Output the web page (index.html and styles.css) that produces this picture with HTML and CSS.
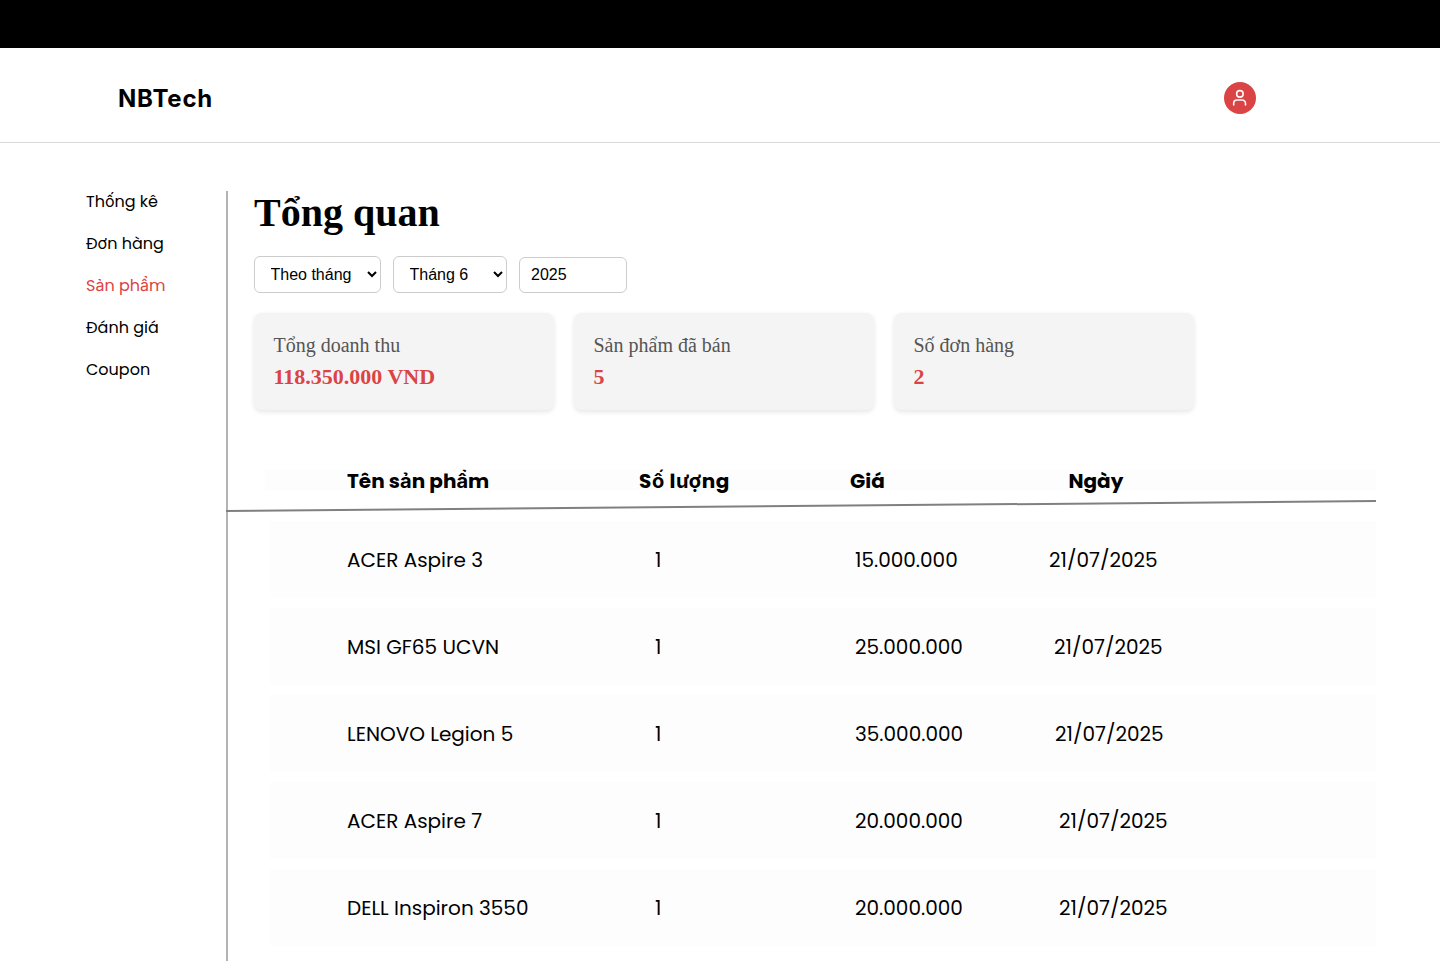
FILE: index.html
```
<!DOCTYPE html>
<html lang="vi">
<head>
<meta charset="utf-8">
<title>NBTech</title>
<link rel="stylesheet" href="styles.css">
</head>
<body>
<div class="topbar"></div>
<header class="header">
  <div class="logo">NBTech</div>
  <a class="account" href="#" aria-label="Account">
    <svg width="32" height="32" viewBox="0 0 32 32" fill="none" stroke="#fafafa" stroke-width="1.600" stroke-linecap="round" stroke-linejoin="round"><path d="M21.500 23v-1.700a3.300 3.300 0 0 0-3.300-3.300h-5.200a3.300 3.300 0 0 0-3.300 3.300V23"/><circle cx="15.900" cy="11.900" r="3.250"/></svg>
  </a>
</header>
<main class="layout">
  <nav class="sidebar">
    <a href="#">Thống kê</a>
    <a href="#">Đơn hàng</a>
    <a class="active" href="#">Sản phẩm</a>
    <a href="#">Đánh giá</a>
    <a href="#">Coupon</a>
  </nav>
  <section class="content">
    <h1 class="title">Tổng quan</h1>
    <div class="filters">
      <select class="mode"><option>Theo tháng</option></select>
      <select class="month"><option>Tháng 6</option></select>
      <input class="year" type="text" value="2025">
    </div>
    <div class="cards">
      <div class="card"><div class="label">Tổng doanh thu</div><div class="value">118.350.000 VND</div></div>
      <div class="card"><div class="label">Sản phẩm đã bán</div><div class="value">5</div></div>
      <div class="card"><div class="label">Số đơn hàng</div><div class="value">2</div></div>
    </div>
    <div class="thead">
      <span>Tên sản phẩm</span><span class="h-qty">Số lượng</span><span>Giá</span><span>Ngày</span>
    </div>
    <svg class="rule" width="1150" height="14" viewBox="0 0 1150 14"><path d="M0 12L1150 2" stroke="#808080" stroke-width="2"/></svg>
    <div class="rows">
      <div class="row r1"><span>ACER Aspire 3</span><span>1</span><span>15.000.000</span><span class="date">21/07/2025</span></div>
      <div class="row r2"><span>MSI GF65 UCVN</span><span>1</span><span>25.000.000</span><span class="date">21/07/2025</span></div>
      <div class="row r3"><span>LENOVO Legion 5</span><span>1</span><span>35.000.000</span><span class="date">21/07/2025</span></div>
      <div class="row r4"><span>ACER Aspire 7</span><span>1</span><span>20.000.000</span><span class="date">21/07/2025</span></div>
      <div class="row r5"><span>DELL Inspiron 3550</span><span>1</span><span>20.000.000</span><span class="date">21/07/2025</span></div>
    </div>
  </section>
</main>
</body>
</html>
```
FILE: styles.css
```
* { box-sizing: border-box; }
body { margin: 0; height: 961px; overflow: hidden; background: #fff; color: #000; font-family: Poppins, Inter, sans-serif; }
.topbar { height: 48px; background: #000; }
.header { height: 95px; padding: 6px 184px 0 118px; display: flex; align-items: center; justify-content: space-between; border-bottom: 1px solid #d9d9d9; }
.logo { font: 700 24px/24px Inter, sans-serif; letter-spacing: 0.8px; padding-top: 1px; }
.account { width: 32px; height: 32px; border-radius: 50%; background: #db4444; }
.account svg { display: block; }
.layout { display: flex; padding-top: 48px; height: 818px; }
.sidebar { width: 226px; padding-left: 86px; margin-top: -1px; display: flex; flex-direction: column; gap: 18px; font-size: 16px; line-height: 24px; }
.sidebar a { color: #000; text-decoration: none; }
.sidebar .active { color: #db4444; }
.content { width: 1150px; border-left: 2px solid #b3b3b3; }
.title { margin: -1px 0 0; padding-left: 26px; font: 700 40px/46px "Liberation Serif", serif; }
.filters { display: flex; gap: 12px; padding: 20px 0 0 26px; align-items: flex-end; }
.filters select, .filters input { height: 37px; border: 1px solid #ccc; border-radius: 6px; background: #fff; color: #000; font: 16px "Liberation Sans", sans-serif; padding: 0 0 0 11.5px; }
.filters .mode { width: 127px; }
.filters .month { width: 114px; }
.filters .year { width: 108px; height: 36px; padding-left: 11px; }
.cards { display: flex; gap: 20px; padding: 20px 0 0 25.5px; font-family: "Liberation Serif", serif; }
.card { width: 300px; height: 97px; padding: 20px 20px 0; background: #f4f4f4; border-radius: 8px; box-shadow: 0 2px 5px rgba(0, 0, 0, 0.1); }
.label { font-size: 20px; line-height: 24px; color: #555; }
.value { margin-top: 8px; font-size: 22px; line-height: 24px; font-weight: 700; color: #db4444; }
.thead { display: grid; grid-template-columns: 292px 211px 218.5px 1fr; margin: 60px 0 0 37px; padding-left: 82px; height: 21px; background: #fdfdfd; font-size: 20px; line-height: 23px; font-weight: 700; white-space: nowrap; }
.h-qty { letter-spacing: 0.6px; }
.rule { display: block; margin: 8px 0 0 -2px; }
.rows { display: flex; flex-direction: column; gap: 10px; padding: 8px 0 0 42px; }
.row { display: grid; grid-template-columns: 308px 200px 194px 1fr; height: 77px; padding: 1px 0 0 77px; align-items: center; background: #fdfdfd; font-size: 20px; line-height: 24px; white-space: nowrap; }
.r2 .date { margin-left: 5px; }
.r3 .date { margin-left: 6px; }
.r4 .date, .r5 .date { margin-left: 10px; }
```
